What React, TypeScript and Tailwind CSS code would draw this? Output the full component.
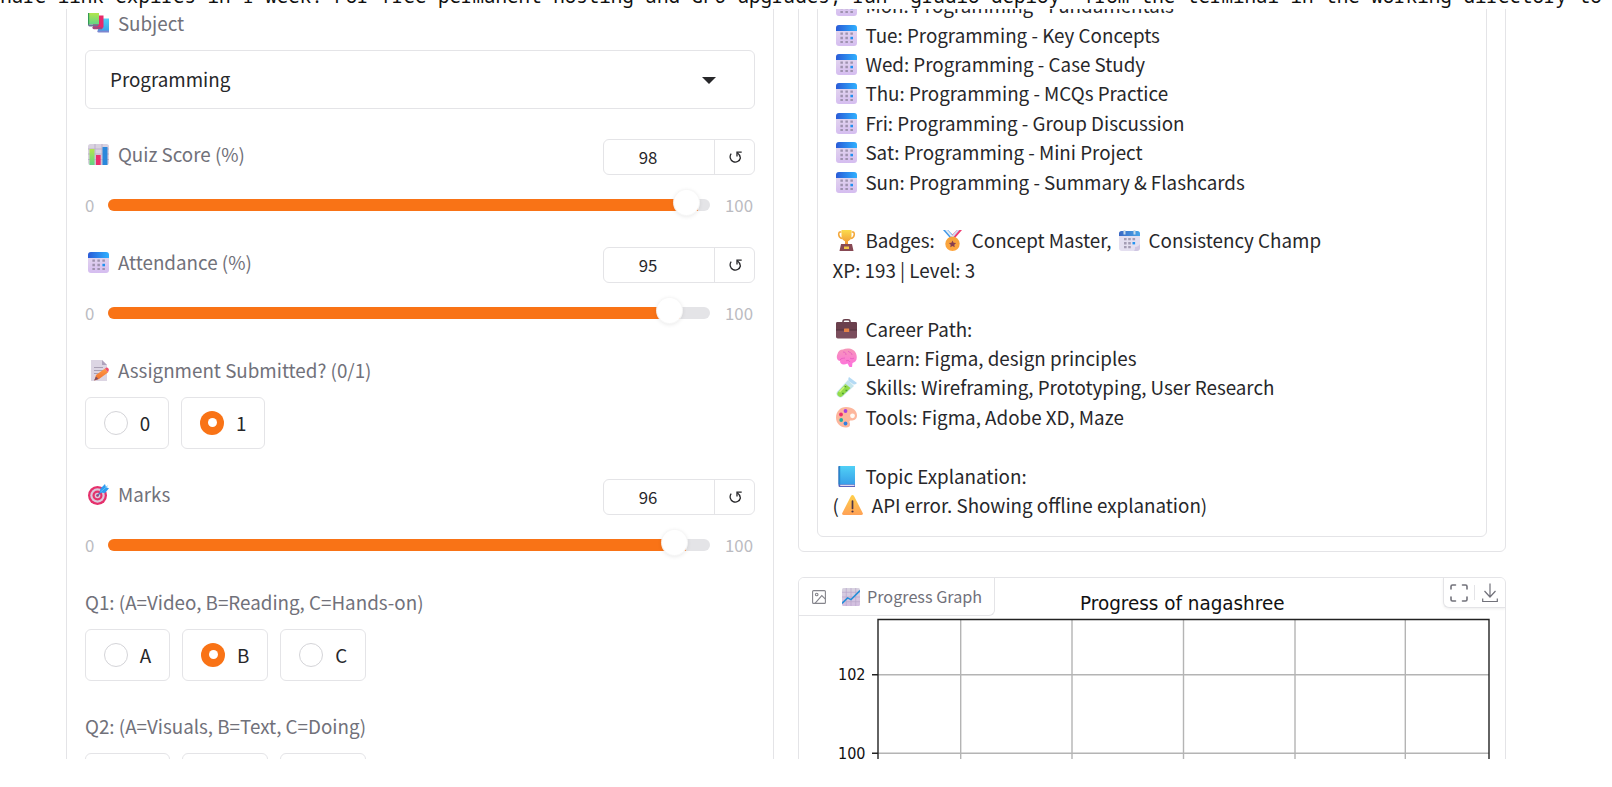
import type { ReactNode } from "react";

const glyphs: Record<string, ReactNode> = {
  calendar: (
    <>
      <rect width="21" height="21" rx="3" fill="url(#lilac)" />
      <path d="M0 6V3a3 3 0 0 1 3-3h15a3 3 0 0 1 3 3v3z" fill="url(#sky)" />
      <path
        d="M4.4 7.4h2.500v2.300H4.4zM9.400 7.4h2.500v2.300H9.400zM14.400 7.4h2.500v2.300h-2.500zM4.4 11.800h2.500v2.400H4.4zM9.400 11.800h2.500v2.400H9.400zM4.4 15.900h2.500v2.200H4.4zM9.400 15.900h2.500v2.200H9.400zM14.400 15.900h2.500v2.200h-2.500z"
        fill="#9e92ae"
      />
      <path d="M14.400 11.800h2.600v2.500h-2.600z" fill="#1e90f0" />
    </>
  ),
  spiral: (
    <>
      <path d="M0 4h21v11l-5 6H3a3 3 0 0 1-3-3z" fill="#e4dff0" />
      <path d="M21 14v4a3 3 0 0 1-3 3h-3c1-1 1-3 1-4 2 0 4-1 5-3z" fill="#cfc6e2" />
      <path d="M0 6V3.500a2.500 2.500 0 0 1 2.500-2.500h16A2.500 2.500 0 0 1 21 3.500V6z" fill="url(#navy)" />
      <path d="M4.500 0h2v4.500h-2zM14.500 0h2v4.500h-2z" fill="#c9dcea" />
      <path
        d="M5 8h2.600v2.300H5zM9.200 8h2.600v2.300H9.200zM13.500 8h2.600v2.300h-2.600zM5 12h2.600v2.400H5zM9.200 12h2.600v2.400H9.200zM5 16h2.600v2.300H5zM9.200 16h2.600v2.300H9.200z"
        fill="#a49db4"
      />
      <path d="M13.500 12h2.600v2.400h-2.600z" fill="#2593f0" />
    </>
  ),
  books: (
    <>
      <path d="M10 5.500h11V19H10z" fill="url(#cyan)" />
      <path d="M9.500 17.500H21V19.500H10.500c-1.300 0-1.500-2-1-2z" fill="#7d86cf" />
      <path d="M5 2.500h10.500V14L14 16H5z" fill="#e8296a" />
      <path d="M4.500 14h9.500v2.200H6c-1.300 0-2-1.500-1.500-2.200z" fill="#a5467e" />
      <path d="M0 0h11v11.500H0z" fill="url(#leaf)" />
      <path d="M0 0h1.200v12H0z" fill="#329a56" />
      <path d="M0 11.500h11l-1.500 2H1.500c-1 0-1.500-1-1.500-2z" fill="#6c7396" />
    </>
  ),
  bars: (
    <>
      <rect width="21" height="21" rx="2.500" fill="#d9d2e0" />
      <path d="M7 0v21M14 0v21M0 5h21M0 10h21M0 15.500h21" stroke="#bdb2cb" />
      <rect x="1.500" y="5" width="5" height="16" fill="url(#leaf)" />
      <rect x="8" y="11" width="4.700" height="10" fill="#ea2e6c" />
      <rect x="14.500" y="3" width="5" height="18" fill="#2a88db" />
    </>
  ),
  memo: (
    <>
      <path d="M3 0h11l5 5v16H3z" fill="#dcd5e3" />
      <path d="M14 0v5h5z" fill="#afa3bd" />
      <path d="M6 7.500h9M6 10.500h9M6 13.500h6" stroke="#aaa1b5" strokeWidth="1.200" />
      <path d="m8 15 9-6.500 3 4L11 19l-4.500 1.500z" fill="url(#amber)" />
      <path d="m17 8.500 1.500-.9c1.200-.5 3 1.700 2.200 2.900L20 12.500z" fill="#f0506e" />
      <path d="m8 16.500-2 4 4.500-1.500z" fill="#805060" />
    </>
  ),
  target: (
    <>
      <circle cx="9.500" cy="11.500" r="9.500" fill="#e5316c" />
      <circle cx="9.500" cy="11.500" r="7.200" fill="#dcc9dc" />
      <circle cx="9.500" cy="11.500" r="5" fill="#e5316c" />
      <circle cx="9.500" cy="11.500" r="2.800" fill="#dcc9dc" />
      <circle cx="9.500" cy="11.500" r="1.300" fill="#b72b5f" />
      <path d="m9.500 11.500 5-5" stroke="#5b6bb4" strokeWidth="1.400" />
      <path d="m11.500 8.500 1-4L17 0l1 3.300 3 .9L17 9z" fill="#2f9cf0" />
      <path d="m12.500 8 7-6" stroke="#58c0f7" />
    </>
  ),
  trophy: (
    <>
      <path d="M5.500 2H4C2 2 2 8 6.500 8.500M15.500 2H17c2 0 2 6-2.500 6.500" fill="none" stroke="#f4a83b" strokeWidth="1.600" />
      <path d="M5.500 0h10v6c0 3-1.800 4.500-3.500 5.300V15H9v-3.700C7.300 10.500 5.500 9 5.500 6z" fill="url(#gold)" />
      <path d="M5 14h11l1.500 7h-14z" fill="#874954" />
      <path d="M8 16.500h5v2.500H8z" fill="#f3c548" />
    </>
  ),
  medal: (
    <>
      <path d="m1 0 7 8 3-3L6 0z" fill="#4098e8" />
      <path d="m3 0 6 7 1.500-1.500L5.500 0z" fill="#e4edf7" />
      <path d="m20 0-7 8-3-3 5-5z" fill="#ef3b70" />
      <path d="m17.500 0-6 7L10 5.500 15 0z" fill="#cfdcf3" />
      <circle cx="10.500" cy="13.800" r="7.200" fill="url(#amberSoft)" />
      <path d="m10.500 10.500 1.100 2.200 2.500.3-1.800 1.700.4 2.500-2.200-1.200-2.200 1.200.4-2.500L6.900 13l2.500-.3z" fill="#873f50" />
    </>
  ),
  briefcase: (
    <>
      <path d="M7 4V2.500C7 1 8 .8 9 .8h3c1 0 2 .2 2 1.700V4" fill="none" stroke="#683f4b" strokeWidth="1.500" />
      <rect y="3" width="21" height="16.500" rx="1.800" fill="#7b4e5d" />
      <path d="M0 4.500Q0 3 1.500 3h18Q21 3 21 4.500V11H0z" fill="#6b404d" />
      <path d="M0 11h21" stroke="#54323e" />
      <rect x="8" y="9.500" width="5.200" height="3.500" rx=".5" fill="#e58347" />
    </>
  ),
  brain: (
    <>
      <path d="M7 1.500C11-.5 19 0 20.500 7c1 5-1 7-4 8l-.5 4h-2.500l-2-3.500C7 17.500 4 16 4 13 0 12 .500 8 1.500 6 2 3.500 4 1.500 7 1.500z" fill="url(#pink)" />
      <path d="M4 12c1-2 3-1.500 5-2M7 4c2 0 3 1 3 3M12 3c1 2 4 1 4 4M14 10c1 1 3 1 4 0M10 13c1-1 3-1 4 1" fill="none" stroke="#e85fc0" strokeWidth=".9" />
    </>
  ),
  tube: (
    <>
      <path d="m12 3 6 6-11.500 10.800c-3 2.700-8-2.300-5.300-5.300z" fill="#c4e4ec" />
      <path d="m9.500 7 5 4-8.500 8.200c-2.600 2.300-6.300-1.500-4-4.200z" fill="#93dc48" />
      <path d="m10 8-6.500 7" stroke="#c9f37a" strokeWidth="1.500" />
      <path d="m13 0 8 6c-1 1.200-2.200 1.600-3.500 1.600L12.800 4C12 2.800 12.200 1 13 0z" fill="#b4daf4" />
      <path d="M6 16.500h1.800M9.500 13.500h1.800M8.500 9.500h1.700" stroke="#4f9a34" strokeWidth="1.400" />
    </>
  ),
  palette: (
    <>
      <path d="M10 0c7 0 11 4 11 8.500 0 4-3 5-6 5-2 0-1.500 1.500-1 3 .5 2.500-1 4-4 4C4 20.500 0 16 0 10.500S4 0 10 0z" fill="#fdb69c" />
      <circle cx="16.500" cy="8.800" r="2.400" fill="#fffaf5" />
      <circle cx="9.500" cy="4" r="1.900" fill="#a640e0" />
      <circle cx="5" cy="7.500" r="1.900" fill="#ec2f6f" />
      <circle cx="5.200" cy="13" r="1.900" fill="#20b3a4" />
      <circle cx="9.500" cy="16.500" r="1.900" fill="#3280df" />
    </>
  ),
  book: (
    <>
      <path d="M2.500 1.200C2.500.4 3 0 4 0h15v21H4c-1 0-1.500-.5-1.500-1.500z" fill="#5b63bd" />
      <path d="M3.500 0H19v18.500H3.500z" fill="url(#cyan)" />
      <path d="M2.500 0h1.700v18.500H2.500z" fill="#2786c9" />
      <path d="M4.200 18.800H18.500v1.200H4.200z" fill="#e3d8ee" />
    </>
  ),
  warning: (
    <>
      <path d="M9 1c.7-1.200 2.300-1.200 3 0l8.700 17c.6 1.200 0 2-1.200 2h-18C.3 20-.3 19 .3 18z" fill="url(#caution)" />
      <path d="M10.500 6v7.500" stroke="#4c3547" strokeWidth="1.700" strokeLinecap="round" />
      <circle cx="10.500" cy="16.500" r="1.100" fill="#4c3547" />
    </>
  ),
  trend: (
    <>
      <rect width="21" height="21" rx="1.800" fill="url(#lilacGray)" />
      <path d="M5 0v21M10.500 0v21M16 0v21M0 5h21M0 10.500h21M0 16h21" stroke="#b9a6ca" strokeWidth=".8" />
      <path d="m0 18 6.500-6.500 4 2L21 3" fill="none" stroke="#248ed8" strokeWidth="1.800" />
    </>
  ),
};

function Gradient({ id, from, to, across = false }: { id: string; from: string; to: string; across?: boolean }) {
  return (
    <linearGradient id={id} x1="0" y1="0" x2={across ? "1" : "0"} y2={across ? "0" : "1"}>
      <stop stopColor={from} />
      <stop offset="1" stopColor={to} />
    </linearGradient>
  );
}

function Gradients() {
  return (
    <svg className="absolute size-0" aria-hidden>
      <defs>
        <Gradient id="lilac" from="#e6dcee" to="#d5bdf0" />
        <Gradient id="lilacGray" from="#d8d3e0" to="#d2bde0" />
        <Gradient id="sky" from="#2a5bd7" to="#2fb0ff" across />
        <Gradient id="navy" from="#3968c4" to="#48a5e8" across />
        <Gradient id="cyan" from="#50d0f6" to="#389fe8" />
        <Gradient id="leaf" from="#b2e64c" to="#62d487" />
        <Gradient id="amber" from="#ff9a45" to="#f2702e" />
        <Gradient id="amberSoft" from="#f4a23b" to="#ffa63f" />
        <Gradient id="gold" from="#fbdc4d" to="#ef9136" />
        <Gradient id="pink" from="#f597b8" to="#ff6fdf" />
        <Gradient id="caution" from="#ffcf4a" to="#ffa156" />
      </defs>
    </svg>
  );
}

function Emoji({ name }: { name: string }) {
  return (
    <svg viewBox="0 0 21 21" className="ml-[3.400px] mr-[4.300px] inline-block size-[21px] align-[-3px]" aria-hidden>
      {glyphs[name]}
    </svg>
  );
}

function Label({ emoji, children }: { emoji?: string; children: ReactNode }) {
  return (
    <div className="h-[29.4px] whitespace-pre leading-[29.400px] text-[#71717a]">
      {emoji && <Emoji name={emoji} />}
      {emoji && " "}
      {children}
    </div>
  );
}

function SliderField({ emoji, label, value }: { emoji: string; label: string; value: number }) {
  return (
    <div className="h-[78px]">
      <div className="flex h-9 items-start justify-between">
        <Label emoji={emoji}>{label}</Label>
        <div className="flex h-9 w-[152px] rounded-md border border-[#e4e4e7] text-[16.800px] text-[#27272a]">
          <div className="flex w-[111px] items-center justify-center border-r border-[#e4e4e7] pr-[22px] pt-px">{value}</div>
          <div className="flex flex-1 items-center justify-center">
            <svg viewBox="0 0 13 13" className="ml-px mt-px size-[13px]" fill="none" stroke="#27272a" strokeWidth="1.300">
              <path d="M2.200 2.700A5.200 5.200 0 1 0 11.400 7C11.200 4.600 10 3 8.300 1.800" />
              <path d="M8 5.500V1.200H12.700" />
            </svg>
          </div>
        </div>
      </div>
      <div className="mt-6 flex h-3 items-center text-[16.800px] text-[#bbbbc1]">
        <span className="w-[23px] pt-px">0</span>
        <div className="relative h-3 w-[602px] rounded-full bg-[#e4e4e7]">
          <div className="h-3 rounded-l-full bg-[#f97316]" style={{ width: `${value}%` }} />
          <div
            className="absolute -top-[8.500px] size-[25px] rounded-full bg-white shadow-[0_0_0_1px_rgba(247,247,247,0.9),0_1px_5px_rgba(0,0,0,0.12)]"
            style={{ left: `calc(${value / 100} * (100% - 24px) - 0.5px)` }}
          />
        </div>
        <span className="pl-[15px] pt-px">100</span>
      </div>
    </div>
  );
}

function RadioField({ emoji, label, options, selected }: { emoji?: string; label: string; options: string[]; selected?: string }) {
  return (
    <div>
      <Label emoji={emoji}>{label}</Label>
      <div className="mt-[12.600px] flex gap-3">
        {options.map((option) => (
          <div key={option} className="flex h-[52px] items-center gap-[11.800px] rounded-md border border-[#e4e4e7] pl-[18px] pr-[18px] text-[#27272a]">
            {option === selected ? (
              <span className="flex size-6 items-center justify-center rounded-full bg-[#f97316]">
                <span className="size-[9px] rounded-full bg-white" />
              </span>
            ) : (
              <span className="size-6 rounded-full border border-[#d4d4d8]" />
            )}
            <span>{option}</span>
          </div>
        ))}
      </div>
    </div>
  );
}

function Line({ emoji, children }: { emoji?: string; children?: ReactNode }) {
  return (
    <p className="h-[29.4px] whitespace-pre leading-[29.4px]">
      {emoji && <Emoji name={emoji} />}
      {emoji && " "}
      {children}
    </p>
  );
}

const schedule = [
  "Mon: Programming - Fundamentals",
  "Tue: Programming - Key Concepts",
  "Wed: Programming - Case Study",
  "Thu: Programming - MCQs Practice",
  "Fri: Programming - Group Discussion",
  "Sat: Programming - Mini Project",
  "Sun: Programming - Summary & Flashcards",
];

function Chart() {
  return (
    <svg viewBox="799 577 706 182" className="block h-[182px] w-[706px]">
      <g stroke="#b4b4b4" strokeWidth="1.400">
        <path d="M960.700 618v141M1072 618v141M1183.500 618v141M1295 618v141M1405.300 618v141" />
        <path d="M878 673.700h611M878 752.300h611" />
      </g>
      <path d="M878 759V618.500h611V759M872 673.700h6M872 752.300h6" fill="none" stroke="#222" strokeWidth="1.400" />
      <g fontFamily="DejaVu Sans" fill="#111">
        <text x="1080" y="608.700" fontSize="19.800" textLength="204.500" lengthAdjust="spacingAndGlyphs">
          Progress of nagashree
        </text>
        <text x="838" y="678.800" fontSize="15.800" textLength="27.500" lengthAdjust="spacingAndGlyphs">
          102
        </text>
        <text x="838" y="758" fontSize="15.800" textLength="27.500" lengthAdjust="spacingAndGlyphs">
          100
        </text>
      </g>
    </svg>
  );
}

function ChartPanel() {
  return (
    <section className="relative mt-[25px] h-[240px] overflow-hidden rounded-md border border-[#e4e4e7]">
      <Chart />
      <div className="absolute left-0 top-0 flex h-[38px] w-[196px] items-center rounded-br-md border-b border-r border-[#e4e4e7] bg-white pl-[13px] text-[16.200px] text-[#71717a]">
        <svg viewBox="0 0 14 14" className="size-[14px]" fill="none" stroke="#85858c" strokeWidth="1.100">
          <rect x=".600" y=".600" width="12.800" height="12.800" rx="1" />
          <circle cx="4.700" cy="4.500" r="1.300" />
          <path d="m3 13.400 6.800-7.800 3.600 3.600" />
        </svg>
        <svg viewBox="0 0 21 21" className="ml-4 mr-[7px] size-[18px]">
          {glyphs.trend}
        </svg>
        <span>Progress Graph</span>
      </div>
      <div className="absolute right-0 top-0 flex h-[30px] w-[62px] items-center rounded-bl-md border-b border-l border-[#e4e4e7] bg-white shadow-[0_1px_3px_rgba(0,0,0,0.07)]">
        <svg viewBox="0 0 18 18" className="ml-[6px] size-[18px]" fill="none" stroke="#71717a" strokeWidth="1.600" strokeLinecap="round">
          <path d="M1 5V2.500Q1 1 2.500 1H5.500M12.500 1H15.500Q17 1 17 2.500V5M17 13v2.500q0 1.500-1.500 1.500h-3M5.500 17h-3Q1 17 1 15.500V13" />
        </svg>
        <span className="ml-[6px] h-[15px] w-px bg-[#e4e4e7]" />
        <svg viewBox="0 0 16 20" className="ml-[7px] h-5 w-4" fill="none" stroke="#71717a" strokeWidth="1.200">
          <path d="M8 .5V14M2.500 8 8 14l5.500-6M.7 15.500v3h14.600v-3" />
        </svg>
      </div>
    </section>
  );
}

export default function App() {
  return (
    <div className="h-[787px] w-full overflow-hidden bg-white font-['Noto_Sans_CJK_SC','Noto_Sans',sans-serif] text-[18.800px] text-[#27272a]">
      <Gradients />
      <div className="flex h-[9px] items-end overflow-hidden">
        <pre className="mb-[1px] ml-[-69px] font-['Noto_Sans_Mono','DejaVu_Sans_Mono',monospace] text-[19.220px] leading-[24px] text-[#111]">
          This share link expires in 1 week. For free permanent hosting and GPU upgrades, run `gradio deploy` from the terminal in the working directory to
        </pre>
      </div>
      <main className="ml-[66px] flex h-[750px] gap-6 overflow-hidden">
        <section className="h-[800px] w-[708px] shrink-0 border-x border-[#e4e4e7] px-[18px]">
          <div className="-mt-px flex flex-col gap-[30px]">
            <div>
              <Label emoji="books">Subject</Label>
              <div className="mt-[12.600px] flex h-[59px] items-center justify-between rounded-md border border-[#e4e4e7] pl-6 pr-[38px]">
                <span>Programming</span>
                <svg viewBox="0 0 14 7" className="mt-0.5 h-[7px] w-[14px]">
                  <path d="M0 0h14L7 7z" fill="#27272a" />
                </svg>
              </div>
            </div>
            <SliderField emoji="bars" label="Quiz Score (%)" value={98} />
            <SliderField emoji="calendar" label="Attendance (%)" value={95} />
            <RadioField emoji="memo" label="Assignment Submitted? (0/1)" options={["0", "1"]} selected="1" />
            <SliderField emoji="target" label="Marks" value={96} />
            <RadioField label="Q1: (A=Video, B=Reading, C=Hands-on)" options={["A", "B", "C"]} selected="B" />
            <RadioField label="Q2: (A=Visuals, B=Text, C=Doing)" options={["A", "B", "C"]} />
          </div>
        </section>
        <div className="w-[708px] shrink-0">
          <section className="-mt-10 h-[583px] rounded-md border border-[#e4e4e7] px-[18px]">
            <div className="h-[567px] rounded-md border border-[#e4e4e7] pl-[14.500px] pt-[19.300px]">
              {schedule.map((day) => (
                <Line key={day} emoji="calendar">
                  {day}
                </Line>
              ))}
              <Line />
              <Line emoji="trophy">
                Badges: <Emoji name="medal" /> Concept Master, <Emoji name="spiral" /> Consistency Champ
              </Line>
              <Line>XP: 193 | Level: 3</Line>
              <Line />
              <Line emoji="briefcase">Career Path:</Line>
              <Line emoji="brain">Learn: Figma, design principles</Line>
              <Line emoji="tube">Skills: Wireframing, Prototyping, User Research</Line>
              <Line emoji="palette">Tools: Figma, Adobe XD, Maze</Line>
              <Line />
              <Line emoji="book">Topic Explanation:</Line>
              <Line>
                (<Emoji name="warning" /> API error. Showing offline explanation)
              </Line>
            </div>
          </section>
          <ChartPanel />
        </div>
      </main>
    </div>
  );
}
